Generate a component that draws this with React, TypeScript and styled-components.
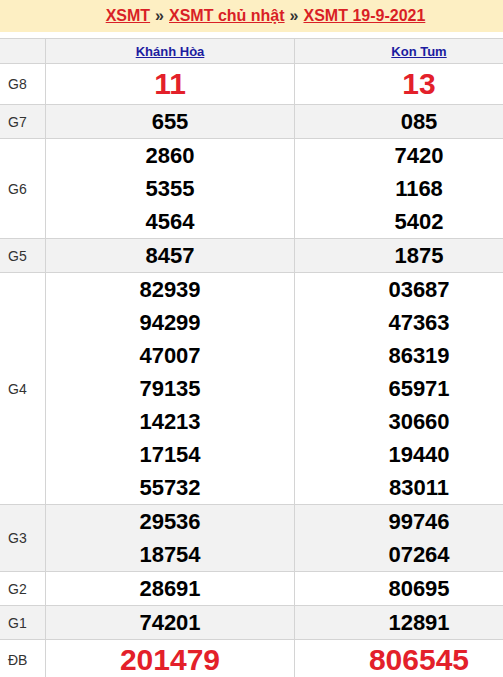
import React from "react";
import styled, { createGlobalStyle } from "styled-components";

const GlobalStyle = createGlobalStyle`
  html, body {
    margin: 0;
    padding: 0;
    background: #fff;
    overflow: hidden;
  }
  body {
    font-family: "Liberation Sans", Arial, sans-serif;
  }
`;

const Page = styled.div`
  width: 100%;
  overflow: hidden;
`;

const Inner = styled.div`
  width: 543px;
`;

const TitleBar = styled.div`
  width: 531px;
  height: 32px;
  display: flex;
  align-items: center;
  justify-content: center;
  background: #fdefc3;
  font-size: 16px;
  font-weight: bold;
  color: #333;
  margin-bottom: 6px;
  gap: 5px;
`;

const TitleLink = styled.a`
  color: #d91f26;
  text-decoration: underline;
`;

const Table = styled.div`
  display: grid;
  grid-template-columns: 45px 249px 249px;
  border-top: 1px solid #d4d4d4;
`;

const Cell = styled.div<{ $alt?: boolean }>`
  background: ${(p) => (p.$alt ? "#f2f2f2" : "#fff")};
  border-bottom: 1px solid #d4d4d4;
  border-left: 1px solid #d4d4d4;
  display: flex;
  flex-direction: column;
  align-items: center;
  justify-content: center;
  &:nth-child(3n + 1) {
    border-left: none;
  }
`;

const HeadCell = styled(Cell)`
  height: 24px;
`;

const Province = styled.a`
  font-size: 13px;
  font-weight: bold;
  color: #1c1ca0;
  text-decoration: underline;
`;

const Label = styled(Cell)`
  align-items: flex-start;
  padding-left: 8px;
  font-size: 14px;
  color: #333;
`;

const Num = styled.div<{ $big?: boolean }>`
  font-size: ${(p) => (p.$big ? "30px" : "22px")};
  line-height: ${(p) => (p.$big ? "40px" : "33px")};
  font-weight: bold;
  color: ${(p) => (p.$big ? "#e3202a" : "#000")};
`;

type Prize = { label: string; a: string[]; b: string[]; big?: boolean };

const prizes: Prize[] = [
  { label: "G8", a: ["11"], b: ["13"], big: true },
  { label: "G7", a: ["655"], b: ["085"] },
  { label: "G6", a: ["2860", "5355", "4564"], b: ["7420", "1168", "5402"] },
  { label: "G5", a: ["8457"], b: ["1875"] },
  {
    label: "G4",
    a: ["82939", "94299", "47007", "79135", "14213", "17154", "55732"],
    b: ["03687", "47363", "86319", "65971", "30660", "19440", "83011"],
  },
  { label: "G3", a: ["29536", "18754"], b: ["99746", "07264"] },
  { label: "G2", a: ["28691"], b: ["80695"] },
  { label: "G1", a: ["74201"], b: ["12891"] },
  { label: "ĐB", a: ["201479"], b: ["806545"], big: true },
];

const App = () => {
  return (
    <Page>
      <GlobalStyle />
      <Inner>
        <TitleBar>
          <TitleLink>XSMT</TitleLink>»<TitleLink>XSMT chủ nhật</TitleLink>»
          <TitleLink>XSMT 19-9-2021</TitleLink>
        </TitleBar>
        <Table>
          <HeadCell $alt />
          <HeadCell $alt>
            <Province>Khánh Hòa</Province>
          </HeadCell>
          <HeadCell $alt>
            <Province>Kon Tum</Province>
          </HeadCell>
          {prizes.map((p, i) => {
            const alt = i % 2 === 1;
            return (
              <React.Fragment key={p.label}>
                <Label $alt={alt}>{p.label}</Label>
                <Cell $alt={alt}>
                  {p.a.map((n, j) => (
                    <Num key={j} $big={p.big}>{n}</Num>
                  ))}
                </Cell>
                <Cell $alt={alt}>
                  {p.b.map((n, j) => (
                    <Num key={j} $big={p.big}>{n}</Num>
                  ))}
                </Cell>
              </React.Fragment>
            );
          })}
        </Table>
      </Inner>
    </Page>
  );
};

export default App;
